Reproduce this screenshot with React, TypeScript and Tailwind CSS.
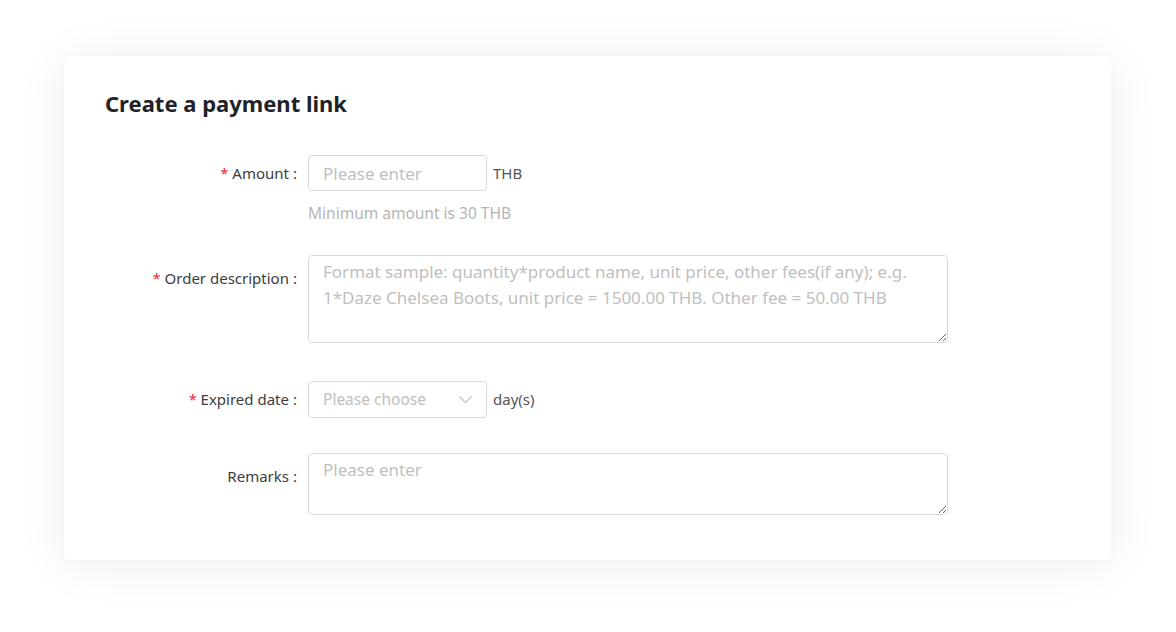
import React from "react";

const labelClass =
  "w-[192px] shrink-0 self-start flex items-center justify-end text-[15px] text-[#3d3d3d] whitespace-nowrap";

function Label({ text, required }: { text: string; required?: boolean }) {
  return (
    <span className="flex items-center">
      {required && <span className="mr-[4px] text-[#f5222d] text-[14px]">*</span>}
      {text}
      <span className="ml-[4px]">:</span>
    </span>
  );
}

export default function App() {
  return (
    <div
      className="w-full h-[632px] bg-white pt-[56px] pl-[64px] pr-[65px]"
      style={{ fontFamily: '"Noto Sans", "Liberation Sans", sans-serif' }}
    >
      <div className="h-[504px] bg-white rounded-lg shadow-[0_4px_50px_rgba(0,0,0,0.075)] pt-[32px] pl-[41px]">
        <h1 className="text-[22px] leading-[30px] font-bold text-[#1f2329]">
          Create a payment link
        </h1>

        {/* Amount */}
        <div className="mt-[37px] flex gap-[11px]">
          <div className={`${labelClass} h-[36px]`}>
            <Label text="Amount" required />
          </div>
          <div>
            <div className="flex items-center gap-[6px]">
              <input
                placeholder="Please enter"
                className="w-[179px] h-[36px] rounded-[4px] border border-[#d9d9d9] px-[14px] text-[17px] text-[#333] placeholder:text-[#c0c0c0] outline-none"
              />
              <span className="text-[15px] text-[#555]">THB</span>
            </div>
            <div className="mt-[10px] text-[15.5px] leading-[24px] text-[#b5b5b5]">
              Minimum amount is 30 THB
            </div>
          </div>
        </div>

        {/* Order description */}
        <div className="mt-[30px] flex gap-[11px]">
          <div className={`${labelClass} h-[46px]`}>
            <Label text="Order description" required />
          </div>
          <textarea
            placeholder={
              "Format sample: quantity*product name, unit price, other fees(if any); e.g.\n1*Daze Chelsea Boots, unit price = 1500.00 THB. Other fee = 50.00 THB"
            }
            className="w-[640px] h-[88px] rounded-[4px] border border-[#d9d9d9] px-[14px] pt-[3px] text-[17px] leading-[26px] text-[#333] placeholder:text-[#c0c0c0] outline-none"
          />
        </div>

        {/* Expired date */}
        <div className="mt-[38px] flex gap-[11px]">
          <div className={`${labelClass} h-[37px]`}>
            <Label text="Expired date" required />
          </div>
          <div className="flex items-center gap-[6px]">
            <div className="w-[179px] h-[37px] rounded-[4px] border border-[#d9d9d9] pl-[14px] pr-[14px] flex items-center justify-between">
              <span className="text-[15.5px] text-[#c0c0c0]">Please choose</span>
              <svg width="13" height="8" viewBox="0 0 13 8" fill="none">
                <polyline points="0.5,0.5 6.5,6.5 12.5,0.5" stroke="#bdbdbd" strokeWidth="1.1" />
              </svg>
            </div>
            <span className="text-[15px] text-[#555]">day(s)</span>
          </div>
        </div>

        {/* Remarks */}
        <div className="mt-[35px] flex gap-[11px]">
          <div className={`${labelClass} h-[46px]`}>
            <Label text="Remarks" />
          </div>
          <textarea
            placeholder="Please enter"
            className="w-[640px] h-[62px] rounded-[4px] border border-[#d9d9d9] px-[14px] pt-[3px] text-[17px] leading-[26px] text-[#333] placeholder:text-[#c0c0c0] outline-none"
          />
        </div>
      </div>
    </div>
  );
}
